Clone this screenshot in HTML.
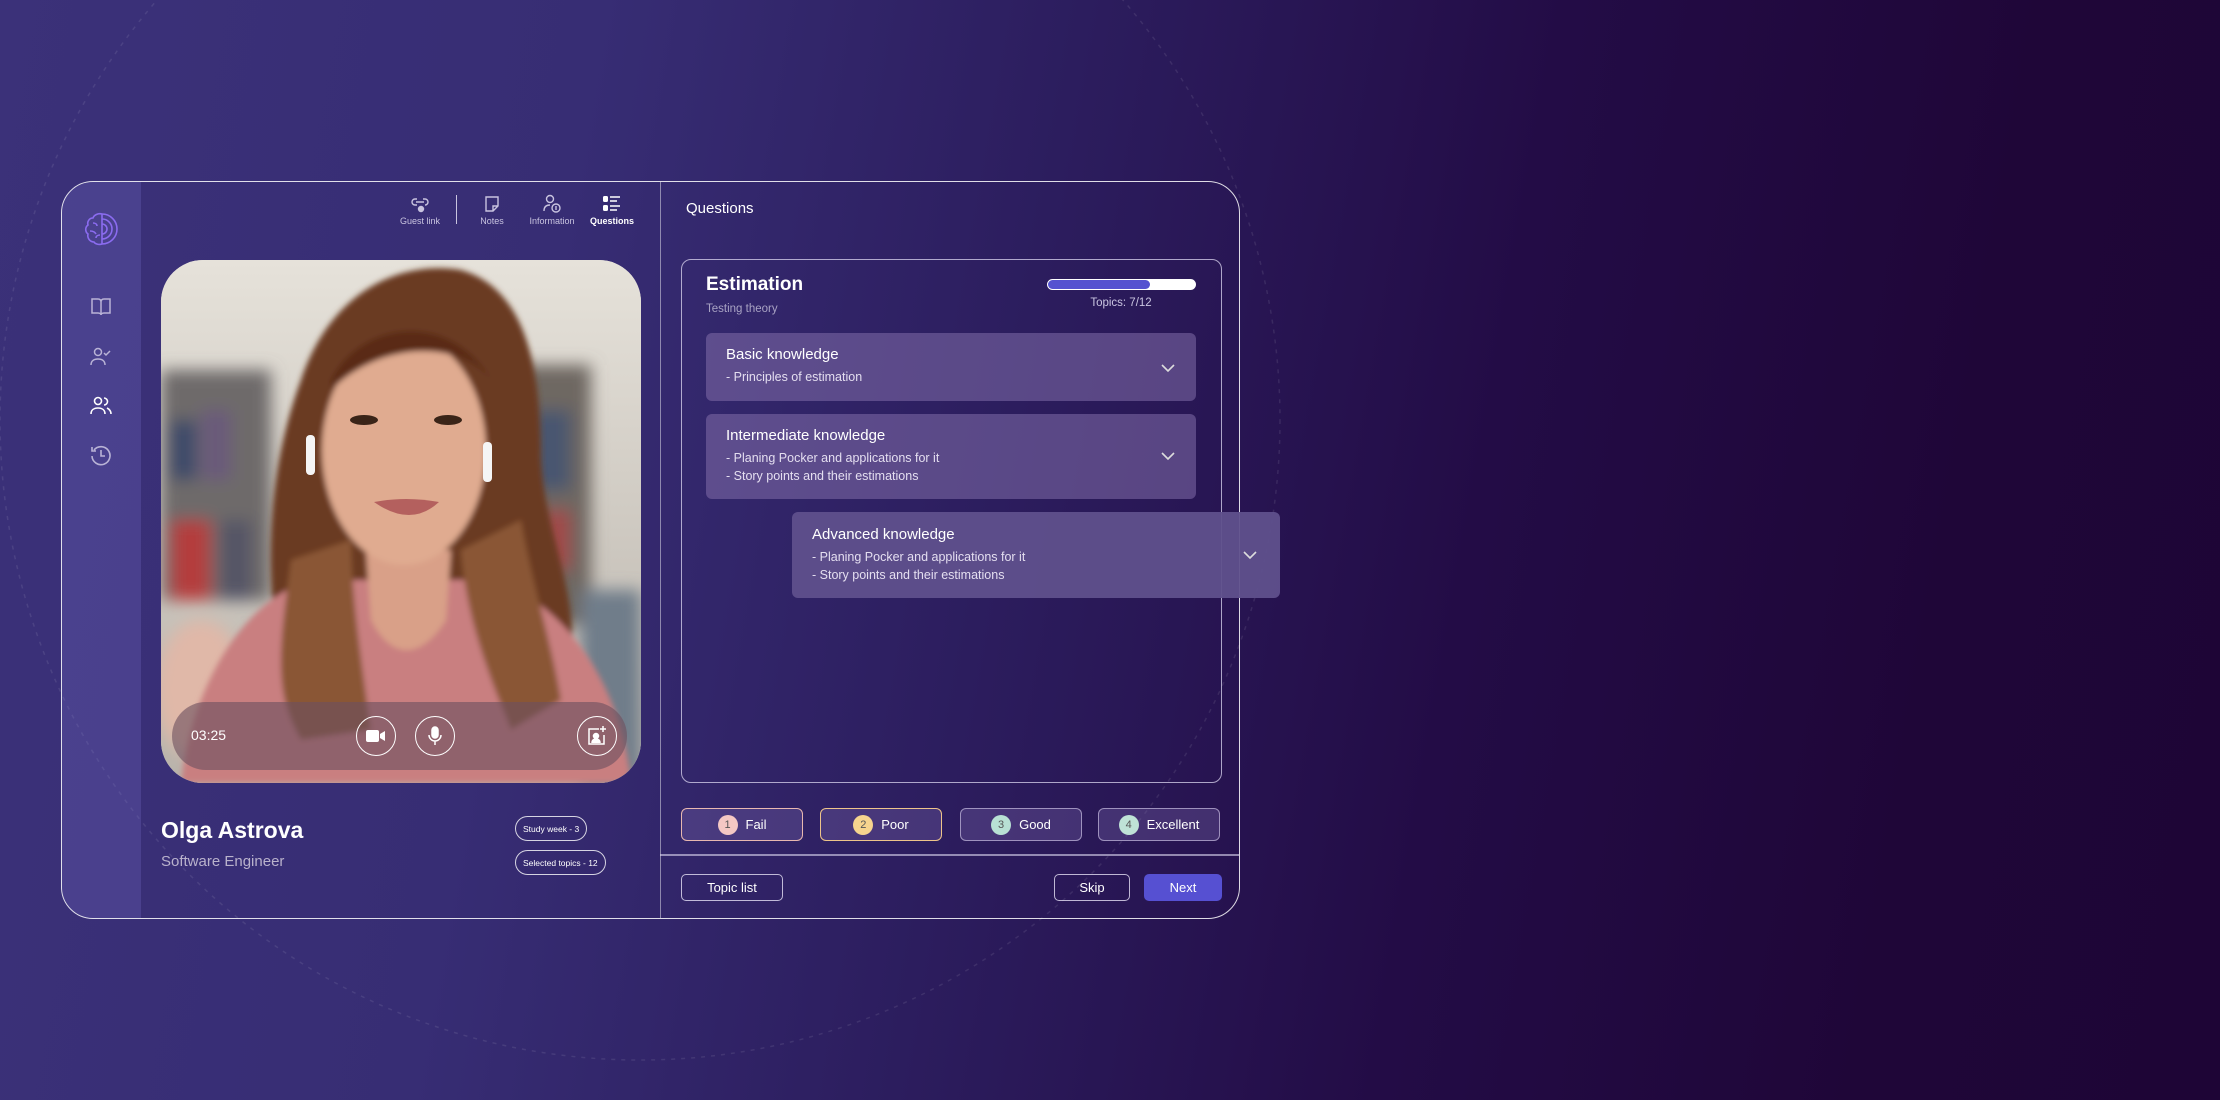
<!DOCTYPE html>
<html><head><meta charset="utf-8"><style>
*{margin:0;padding:0;box-sizing:border-box}
body{width:2220px;height:1100px;overflow:hidden;font-family:"Liberation Sans",sans-serif;color:#fff;
background:linear-gradient(100deg,#3b3179 0%,#372d74 25%,#2c1d5e 45%,#230c46 65%,#1f0638 85%,#1e0536 100%);position:relative}
.abs{position:absolute}
.card{left:61px;top:181px;width:1179px;height:738px;border:1.5px solid rgba(255,255,255,.85);border-radius:32px;overflow:hidden}
.side{left:0;top:0;width:79px;height:100%;background:rgba(120,110,200,.28)}
.t{position:absolute;white-space:nowrap}
.navl{font-size:9px;color:#c9c4e0;transform:translateX(-50%)}
.acc{position:absolute;background:rgba(130,110,170,.55);border-radius:6px}
.acc .h{position:absolute;left:20px;font-size:16px;color:#fff}
.acc .s{position:absolute;left:20px;font-size:12.5px;color:#e4def0}
.chev{position:absolute;width:14px;height:14px}
.rb{position:absolute;top:626px;height:33px;width:122px;border:1px solid rgba(220,210,240,.6);border-radius:6px;background:rgba(120,100,170,.35);font-size:13px;display:flex;align-items:center;justify-content:center;gap:8px}
.rb i{font-style:normal;width:20px;height:20px;border-radius:50%;font-size:11px;color:#555;display:flex;align-items:center;justify-content:center}
.btn{position:absolute;top:692px;height:27px;border:1px solid rgba(230,225,245,.8);border-radius:5px;font-size:13px;display:flex;align-items:center;justify-content:center}
.pill{position:absolute;left:453px;height:25px;border:1px solid rgba(255,255,255,.8);border-radius:13px;font-size:8.5px;display:flex;align-items:center;padding:0 7px}
.circ{position:absolute;width:40px;height:40px;border:1.5px solid #fff;border-radius:50%;display:flex;align-items:center;justify-content:center}
</style></head><body>
<svg class="abs" style="left:0;top:0" width="2220" height="1100">
<g fill="none" stroke="rgba(255,255,255,.09)" stroke-width="1.5" stroke-dasharray="4 6">
<circle cx="640" cy="420" r="640"/>
</g></svg>

<div class="abs card">
 <div class="abs side"></div>
 <svg class="abs" style="left:22px;top:29px" width="36" height="36" viewBox="0 0 36 36" fill="none" stroke="#8b6cf0" stroke-width="1.6">
  <path d="M18 3v30M18 3c-4-1-8 1-9 4-4 0-6 4-5 7-3 2-3 7 0 9-1 4 2 8 6 8 1 2 5 3 8 2"/>
  <path d="M9 12c2 0 4 1 4 3M6 20c3 0 5 1 6 3M12 27c0-2 2-3 4-3"/>
  <path d="M18 3a15 15 0 0 1 0 30M18 8a10 10 0 0 1 0 20M18 13a5 5 0 0 1 0 10"/>
 </svg>
 <svg class="abs" style="left:28px;top:115px" width="22" height="20" viewBox="0 0 22 20" fill="none" stroke="#b9b3d6" stroke-width="1.5"><path d="M2 2h6c2 0 3 1 3 3v13c0-1-1-2-3-2H2zM20 2h-6c-2 0-3 1-3 3v13c0-1 1-2 3-2h6z"/></svg>
 <svg class="abs" style="left:28px;top:165px" width="22" height="20" viewBox="0 0 22 20" fill="none" stroke="#b9b3d6" stroke-width="1.5"><circle cx="8" cy="5" r="3.5"/><path d="M1 18c0-4 3-6 7-6s7 2 7 6M14 6l2 2 4-4"/></svg>
 <svg class="abs" style="left:28px;top:214px" width="22" height="20" viewBox="0 0 22 20" fill="none" stroke="#fff" stroke-width="1.6"><circle cx="8" cy="5" r="3.5"/><path d="M1 18c0-4 3-6 7-6s7 2 7 6M14 2a3.5 3.5 0 0 1 0 7M17 12c2 1 4 3 4 6"/></svg>
 <svg class="abs" style="left:28px;top:262px" width="22" height="22" viewBox="0 0 22 22" fill="none" stroke="#b9b3d6" stroke-width="1.6"><path d="M4 6a9 9 0 1 1-2 6M2 3v4h4M11 6v6h4"/></svg>

 <svg class="abs" style="left:349px;top:13px" width="18" height="18" viewBox="0 0 18 18" fill="none" stroke="#c9c4e0" stroke-width="1.4"><path d="M6 4h-2a3 3 0 0 0 0 6h2M12 4h2a3 3 0 0 1 0 6M5 7h8"/><circle cx="10" cy="14" r="2.5" fill="#c9c4e0"/></svg>
 <div class="t navl" style="left:358px;top:34px">Guest link</div>
 <div class="abs" style="left:394px;top:13px;width:1px;height:29px;background:#c9c4e0"></div>
 <svg class="abs" style="left:421px;top:13px" width="18" height="18" viewBox="0 0 18 18" fill="none" stroke="#c9c4e0" stroke-width="1.4"><path d="M3 2h12v9l-5 5H3zM15 11h-5v5"/></svg>
 <div class="t navl" style="left:430px;top:34px">Notes</div>
 <svg class="abs" style="left:480px;top:12px" width="20" height="20" viewBox="0 0 20 20" fill="none" stroke="#c9c4e0" stroke-width="1.4"><circle cx="8" cy="5" r="3.5"/><path d="M2 17c0-4 2-6 6-6"/><circle cx="14" cy="14" r="4"/><path d="M14 12v4"/></svg>
 <div class="t navl" style="left:490px;top:34px">Information</div>
 <svg class="abs" style="left:540px;top:13px" width="20" height="18" viewBox="0 0 20 18"><rect x="1" y="1" width="5" height="6" rx="1.5" fill="#fff"/><rect x="1" y="10" width="5" height="6" rx="1.5" fill="#fff"/><path d="M8 2h10M8 6h7M8 11h10M8 15h7" stroke="#fff" stroke-width="1.6"/></svg>
 <div class="t navl" style="left:550px;top:34px;color:#fff;font-weight:bold">Questions</div>

 <div class="abs" style="left:99px;top:78px;width:480px;height:523px;border-radius:42px;overflow:hidden;background:#d8d4cc">
  <svg width="480" height="523" viewBox="0 0 480 523">
   <defs><filter id="b"><feGaussianBlur stdDeviation="8"/></filter><filter id="b2"><feGaussianBlur stdDeviation="3"/></filter>
   <linearGradient id="bg" x1="0" y1="0" x2="0" y2="1"><stop offset="0" stop-color="#e6e2da"/><stop offset="1" stop-color="#b8b2aa"/></linearGradient></defs>
   <rect width="480" height="523" fill="url(#bg)"/>
   <g filter="url(#b)">
    <rect x="0" y="110" width="110" height="230" fill="#6e6a6a"/>
    <rect x="10" y="160" width="25" height="60" fill="#3b4a6a"/><rect x="40" y="150" width="30" height="70" fill="#6a5a7a"/>
    <rect x="10" y="260" width="40" height="80" fill="#b43c3c"/><rect x="60" y="260" width="30" height="80" fill="#556"/>
    <rect x="360" y="105" width="70" height="260" fill="#6e6862"/><rect x="370" y="150" width="40" height="80" fill="#4a5670"/>
    <rect x="380" y="250" width="30" height="60" fill="#a04848"/>
    <rect x="420" y="330" width="60" height="193" fill="#6f7d8a"/>
    <ellipse cx="40" cy="430" rx="45" ry="70" fill="#e0b8a8"/>
   </g>
   <g filter="url(#b2)">
    <path d="M120 410 C100 300 110 200 140 120 C170 30 240 0 300 10 C370 30 380 120 380 200 C385 280 420 330 410 420 Z" fill="#6b3a22"/>
    <path d="M20 523 C30 430 80 340 150 320 L330 320 C400 340 460 420 470 523 Z" fill="#c97f80"/>
    <path d="M205 290 L210 360 C230 400 260 400 285 360 L290 290 Z" fill="#d9a088"/>
    <ellipse cx="243" cy="190" rx="82" ry="115" fill="#e0ab90"/>
    <path d="M130 300 C120 380 110 430 140 480 L210 470 C200 400 190 330 190 280 Z" fill="#8a5634"/>
    <path d="M300 290 C305 360 330 420 350 470 L400 440 C390 380 370 320 360 260 Z" fill="#8a5634"/>
    <path d="M170 120 C200 60 290 50 330 120 C300 80 220 80 170 130 Z" fill="#5a2c18"/>
   </g>
   <ellipse cx="203" cy="160" rx="14" ry="5" fill="#3a2418"/><ellipse cx="287" cy="160" rx="14" ry="5" fill="#3a2418"/>
   <path d="M213 242 Q245 236 278 242 Q250 268 213 242Z" fill="#b4605e"/>
   <rect x="145" y="175" width="9" height="40" rx="4" fill="#f5f5f5"/><rect x="322" y="182" width="9" height="40" rx="4" fill="#f5f5f5"/>
  </svg>
  <div class="abs" style="left:11px;top:442px;width:455px;height:68px;border-radius:34px;background:rgba(110,80,95,.62)"></div>
  <div class="t" style="left:30px;top:467px;font-size:14px">03:25</div>
  <div class="circ" style="left:195px;top:456px"><svg width="20" height="14" viewBox="0 0 20 14"><rect x="0" y="1" width="13" height="12" rx="2" fill="#fff"/><path d="M14 5l5-3v10l-5-3z" fill="#fff"/></svg></div>
  <div class="circ" style="left:254px;top:456px"><svg width="14" height="20" viewBox="0 0 14 20" fill="none" stroke="#fff" stroke-width="1.5"><rect x="4" y="1" width="6" height="11" rx="3" fill="#fff"/><path d="M1 9a6 6 0 0 0 12 0M7 15v4"/></svg></div>
  <div class="circ" style="left:416px;top:456px"><svg width="20" height="20" viewBox="0 0 20 20" fill="none" stroke="#fff" stroke-width="1.5"><path d="M12 3H2v15h15V9"/><circle cx="9" cy="10" r="2.5" fill="#fff"/><path d="M5 17c0-3 2-4 4-4s4 1 4 4" fill="#fff"/><path d="M16 0v6M13 3h6"/></svg></div>
 </div>

 <div class="t" style="left:99px;top:635px;font-size:23px;font-weight:bold">Olga Astrova</div>
 <div class="t" style="left:99px;top:671px;font-size:15px;color:#b9b2cc">Software Engineer</div>
 <div class="pill" style="top:634px">Study week - 3</div>
 <div class="pill" style="top:668px">Selected topics - 12</div>

 <div class="abs" style="left:598px;top:0;width:1px;height:100%;background:rgba(255,255,255,.45)"></div>
 <div class="t" style="left:624px;top:18px;font-size:15px">Questions</div>
 <div class="abs" style="left:619px;top:77px;width:541px;height:524px;border:1.2px solid rgba(220,215,240,.75);border-radius:10px"></div>
 <div class="t" style="left:644px;top:92px;font-size:19px;font-weight:bold">Estimation</div>
 <div class="t" style="left:644px;top:121px;font-size:11.5px;color:#a9a3c4">Testing theory</div>
 <div class="abs" style="left:985px;top:97px;width:149px;height:11px;border-radius:6px;background:#fff;border:1px solid #fff"><div style="width:102px;height:100%;border-radius:6px;background:#5552d0"></div></div>
 <div class="t" style="left:1059px;top:115px;font-size:11.5px;color:#c9c4e0;transform:translateX(-50%)">Topics: 7/12</div>

 <div class="acc" style="left:644px;top:151px;width:490px;height:68px">
  <div class="h" style="top:13px;font-size:15px">Basic knowledge</div>
  <div class="s" style="top:37px">- Principles of estimation</div>
  <svg class="chev" style="left:455px;top:28px" viewBox="0 0 14 14" fill="none" stroke="#ddd" stroke-width="1.6"><path d="M1 4l6 6 6-6"/></svg>
 </div>
 <div class="acc" style="left:644px;top:232px;width:490px;height:85px">
  <div class="h" style="top:13px;font-size:15px">Intermediate knowledge</div>
  <div class="s" style="top:37px">- Planing Pocker and applications for it</div>
  <div class="s" style="top:55px">- Story points and their estimations</div>
  <svg class="chev" style="left:455px;top:35px" viewBox="0 0 14 14" fill="none" stroke="#ddd" stroke-width="1.6"><path d="M1 4l6 6 6-6"/></svg>
 </div>

 <div class="t rb" style="left:619px;border-color:#e8b8b0"><i style="background:#f4c8c4">1</i>Fail</div>
 <div class="t rb" style="left:758px;border-color:#eec48a"><i style="background:#f6d48e">2</i>Poor</div>
 <div class="t rb" style="left:898px"><i style="background:#b8e0d4">3</i>Good</div>
 <div class="t rb" style="left:1036px"><i style="background:#bfe2d6">4</i>Excellent</div>
 <div class="abs" style="left:598px;top:672px;width:600px;height:1.5px;background:rgba(220,215,240,.6)"></div>
 <div class="btn" style="left:619px;width:102px">Topic list</div>
 <div class="btn" style="left:992px;width:76px">Skip</div>
 <div class="btn" style="left:1082px;width:78px;background:#5650d2;border-color:#5650d2">Next</div>
</div>

<div class="acc" style="left:792px;top:512px;width:488px;height:86px;background:rgba(95,80,140,.95)">
 <div class="h" style="top:14px;font-size:15px">Advanced knowledge</div>
 <div class="s" style="top:38px">- Planing Pocker and applications for it</div>
 <div class="s" style="top:56px">- Story points and their estimations</div>
 <svg class="chev" style="left:451px;top:36px" viewBox="0 0 14 14" fill="none" stroke="#ddd" stroke-width="1.6"><path d="M1 4l6 6 6-6"/></svg>
</div>
</body></html>
